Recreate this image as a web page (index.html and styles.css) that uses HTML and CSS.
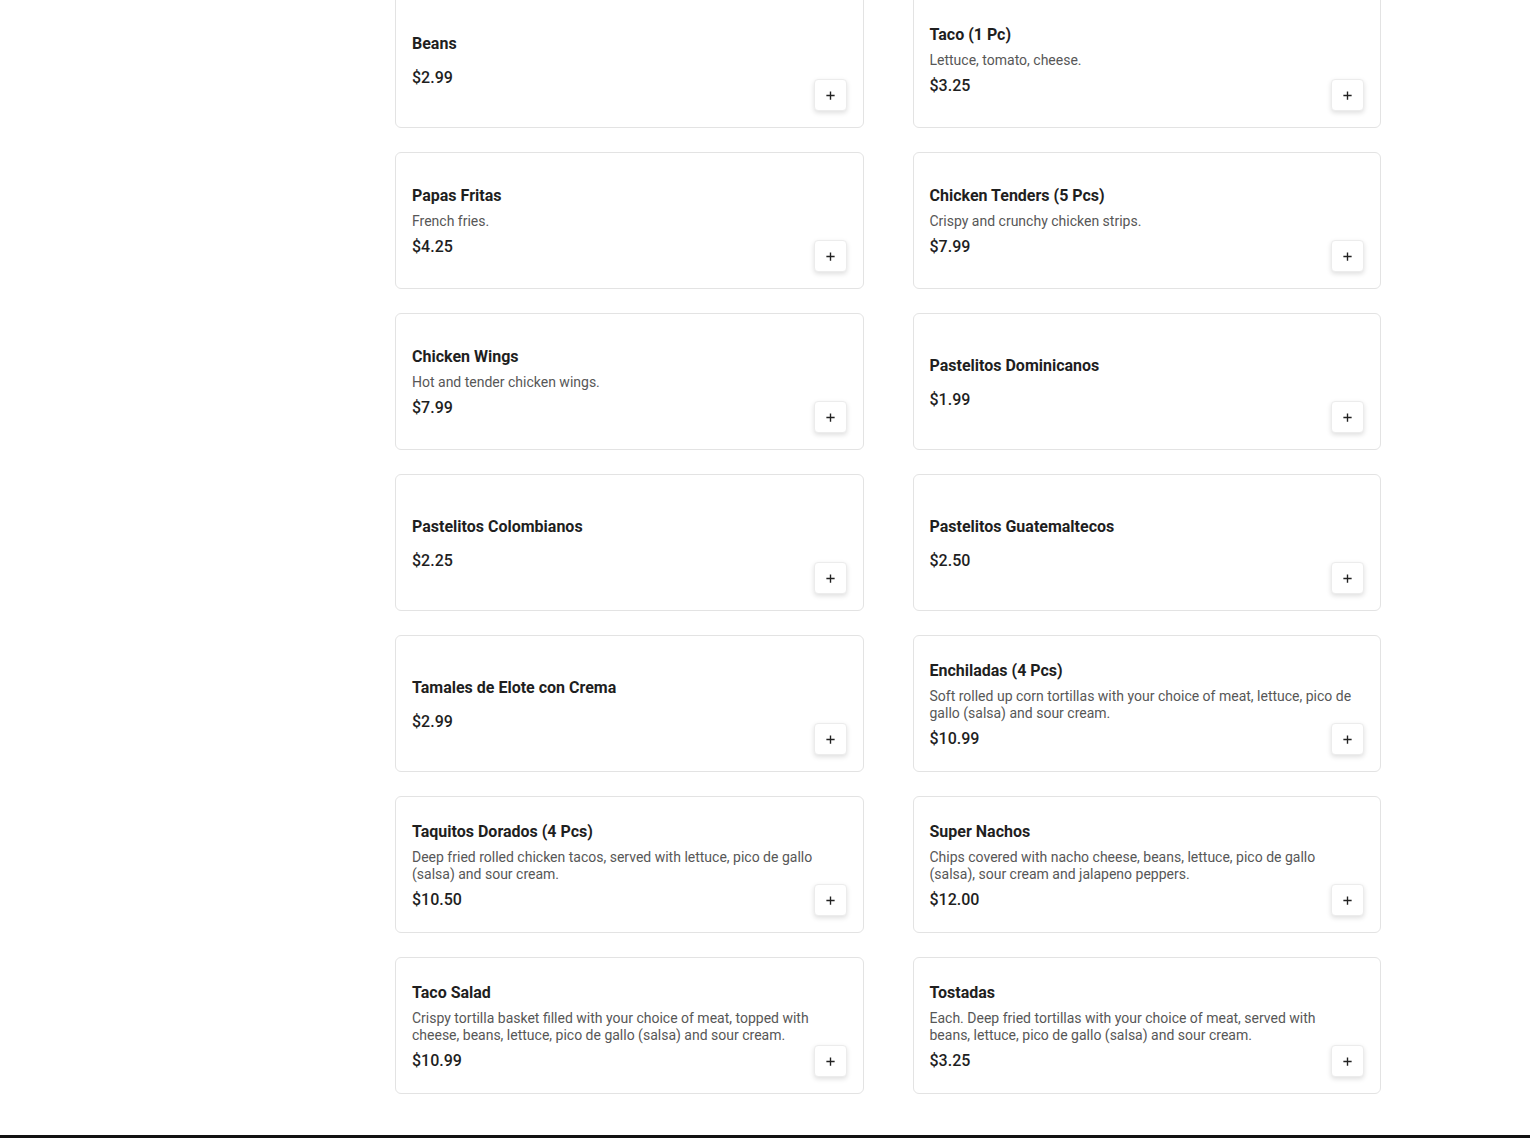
FILE: index.html
```html
<!DOCTYPE html>
<html lang="en">
<head>
<meta charset="utf-8">
<title>Menu</title>
<link rel="stylesheet" href="styles.css">
</head>
<body>
<main class="page">
  <section class="menu-grid">
    <article class="card">
      <div class="info"><h3 class="name">Beans</h3><div class="price">$2.99</div></div>
      <button class="add" aria-label="Add"><svg viewBox="0 0 12 12" width="12" height="12"><path d="M6 1.5v9M1.5 6h9" stroke="#222" stroke-width="1.5" fill="none"/></svg></button>
    </article>
    <article class="card">
      <div class="info"><h3 class="name">Taco (1 Pc)</h3><p class="desc">Lettuce, tomato, cheese.</p><div class="price">$3.25</div></div>
      <button class="add" aria-label="Add"><svg viewBox="0 0 12 12" width="12" height="12"><path d="M6 1.5v9M1.5 6h9" stroke="#222" stroke-width="1.5" fill="none"/></svg></button>
    </article>
    <article class="card">
      <div class="info"><h3 class="name">Papas Fritas</h3><p class="desc">French fries.</p><div class="price">$4.25</div></div>
      <button class="add" aria-label="Add"><svg viewBox="0 0 12 12" width="12" height="12"><path d="M6 1.5v9M1.5 6h9" stroke="#222" stroke-width="1.5" fill="none"/></svg></button>
    </article>
    <article class="card">
      <div class="info"><h3 class="name">Chicken Tenders (5 Pcs)</h3><p class="desc">Crispy and crunchy chicken strips.</p><div class="price">$7.99</div></div>
      <button class="add" aria-label="Add"><svg viewBox="0 0 12 12" width="12" height="12"><path d="M6 1.5v9M1.5 6h9" stroke="#222" stroke-width="1.5" fill="none"/></svg></button>
    </article>
    <article class="card">
      <div class="info"><h3 class="name">Chicken Wings</h3><p class="desc">Hot and tender chicken wings.</p><div class="price">$7.99</div></div>
      <button class="add" aria-label="Add"><svg viewBox="0 0 12 12" width="12" height="12"><path d="M6 1.5v9M1.5 6h9" stroke="#222" stroke-width="1.5" fill="none"/></svg></button>
    </article>
    <article class="card">
      <div class="info"><h3 class="name">Pastelitos Dominicanos</h3><div class="price">$1.99</div></div>
      <button class="add" aria-label="Add"><svg viewBox="0 0 12 12" width="12" height="12"><path d="M6 1.5v9M1.5 6h9" stroke="#222" stroke-width="1.5" fill="none"/></svg></button>
    </article>
    <article class="card">
      <div class="info"><h3 class="name">Pastelitos Colombianos</h3><div class="price">$2.25</div></div>
      <button class="add" aria-label="Add"><svg viewBox="0 0 12 12" width="12" height="12"><path d="M6 1.5v9M1.5 6h9" stroke="#222" stroke-width="1.5" fill="none"/></svg></button>
    </article>
    <article class="card">
      <div class="info"><h3 class="name">Pastelitos Guatemaltecos</h3><div class="price">$2.50</div></div>
      <button class="add" aria-label="Add"><svg viewBox="0 0 12 12" width="12" height="12"><path d="M6 1.5v9M1.5 6h9" stroke="#222" stroke-width="1.5" fill="none"/></svg></button>
    </article>
    <article class="card">
      <div class="info"><h3 class="name">Tamales de Elote con Crema</h3><div class="price">$2.99</div></div>
      <button class="add" aria-label="Add"><svg viewBox="0 0 12 12" width="12" height="12"><path d="M6 1.5v9M1.5 6h9" stroke="#222" stroke-width="1.5" fill="none"/></svg></button>
    </article>
    <article class="card">
      <div class="info"><h3 class="name">Enchiladas (4 Pcs)</h3><p class="desc">Soft rolled up corn tortillas with your choice of meat, lettuce, pico de gallo (salsa) and sour cream.</p><div class="price">$10.99</div></div>
      <button class="add" aria-label="Add"><svg viewBox="0 0 12 12" width="12" height="12"><path d="M6 1.5v9M1.5 6h9" stroke="#222" stroke-width="1.5" fill="none"/></svg></button>
    </article>
    <article class="card">
      <div class="info"><h3 class="name">Taquitos Dorados (4 Pcs)</h3><p class="desc">Deep fried rolled chicken tacos, served with lettuce, pico de gallo (salsa) and sour cream.</p><div class="price">$10.50</div></div>
      <button class="add" aria-label="Add"><svg viewBox="0 0 12 12" width="12" height="12"><path d="M6 1.5v9M1.5 6h9" stroke="#222" stroke-width="1.5" fill="none"/></svg></button>
    </article>
    <article class="card">
      <div class="info"><h3 class="name">Super Nachos</h3><p class="desc">Chips covered with nacho cheese, beans, lettuce, pico de gallo (salsa), sour cream and jalapeno peppers.</p><div class="price">$12.00</div></div>
      <button class="add" aria-label="Add"><svg viewBox="0 0 12 12" width="12" height="12"><path d="M6 1.5v9M1.5 6h9" stroke="#222" stroke-width="1.5" fill="none"/></svg></button>
    </article>
    <article class="card">
      <div class="info"><h3 class="name">Taco Salad</h3><p class="desc">Crispy tortilla basket filled with your choice of meat, topped with cheese, beans, lettuce, pico de gallo (salsa) and sour cream.</p><div class="price">$10.99</div></div>
      <button class="add" aria-label="Add"><svg viewBox="0 0 12 12" width="12" height="12"><path d="M6 1.5v9M1.5 6h9" stroke="#222" stroke-width="1.5" fill="none"/></svg></button>
    </article>
    <article class="card">
      <div class="info"><h3 class="name">Tostadas</h3><p class="desc">Each. Deep fried tortillas with your choice of meat, served with beans, lettuce, pico de gallo (salsa) and sour cream.</p><div class="price">$3.25</div></div>
      <button class="add" aria-label="Add"><svg viewBox="0 0 12 12" width="12" height="12"><path d="M6 1.5v9M1.5 6h9" stroke="#222" stroke-width="1.5" fill="none"/></svg></button>
    </article>
  </section>
</main>
<footer class="footer"></footer>
</body>
</html>
```
FILE: styles.css
```css
* { box-sizing: border-box; }
html, body { margin: 0; padding: 0; background: #fff; }
body {
  font-family: Roboto, "Liberation Sans", Arial, sans-serif;
  color: #1f1f1f;
  overflow: hidden;
}
.page {
  margin-top: -9px;
  padding: 0 0 41px 395px;
}
.menu-grid {
  width: 986px;
  display: grid;
  grid-template-columns: 1fr 1fr;
  column-gap: 49px;
  row-gap: 24px;
}
.card {
  height: 137px;
  border: 1px solid #e3e3e3;
  border-radius: 6px;
  background: #fff;
  display: grid;
  grid-template-columns: 1fr;
  grid-template-rows: 1fr;
  padding: 2px 16px 0 16px;
}
.info {
  grid-area: 1 / 1;
  align-self: center;
  display: flex;
  flex-direction: column;
  padding-right: 9px;
}
.name {
  margin: 0 0 5px 0;
  font-size: 16px;
  line-height: 24px;
  font-weight: 700;
  color: #1f1f1f;
}
.desc {
  margin: 0;
  font-size: 14px;
  line-height: 17px;
  color: #575757;
}
.price {
  margin-top: 5px;
  font-size: 16px;
  line-height: 24px;
  font-weight: 500;
  color: #1f1f1f;
}
.add {
  grid-area: 1 / 1;
  justify-self: end;
  align-self: end;
  margin-bottom: 16px;
  width: 33px;
  height: 32px;
  padding: 0;
  border: 1px solid #ececec;
  border-radius: 4px;
  background: #fff;
  box-shadow: 0 2px 5px rgba(0,0,0,0.13);
  display: flex;
  align-items: center;
  justify-content: center;
  cursor: pointer;
}
.add svg { display: block; width: 11px; height: 11px; }
.footer {
  height: 60px;
  background: #111;
}
```
